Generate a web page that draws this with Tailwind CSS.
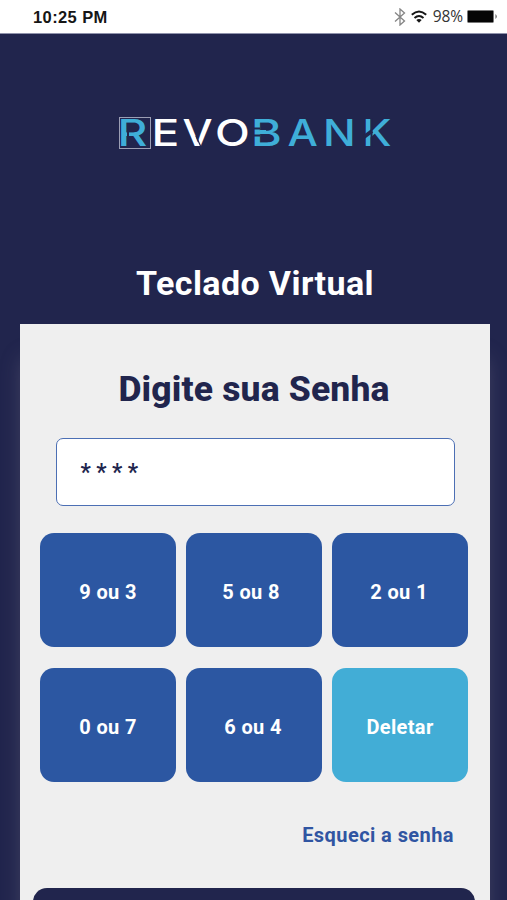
<!DOCTYPE html>
<html lang="pt-BR">
<head>
<meta charset="utf-8">
<meta name="viewport" content="width=device-width, initial-scale=1">
<title>RevoBank</title>
<script src="https://cdn.jsdelivr.net/npm/@tailwindcss/browser@4"></script>
</head>
<body class="h-[900px] overflow-hidden bg-[#21254d] font-['Roboto',sans-serif]">
<div class="flex h-[900px] flex-col overflow-hidden">
  <header class="flex h-[34px] shrink-0 items-center justify-between border-b border-[#8f92ab] bg-white pr-[9px] pl-[33px] font-['Liberation_Sans',sans-serif]">
    <span class="pt-[2px] text-[16.5px] leading-none font-bold tracking-[0.4px] whitespace-nowrap text-[#161616]">10:25 PM</span>
    <div class="flex items-center">
      <svg class="mr-[5px]" width="12" height="18" viewBox="0 0 12 18" fill="none" stroke="#858585" stroke-width="1.3"><path d="M1 4.5 10.5 13 6 17V1l4.5 4L1 13.5"/></svg>
      <svg class="mr-[6px]" width="16" height="13" viewBox="0 0 16 13" fill="none" stroke="#161616" stroke-width="2"><path d="M.8 4.8Q8-1.8 15.2 4.8M3.5 8Q8 4 12.5 8"/><path d="M8 12.7 5.3 10Q8 7.8 10.7 10Z" fill="#161616" stroke="none"/></svg>
      <span class="mr-[4px] font-['Open_Sans',sans-serif] text-[15.5px] leading-none tracking-[-0.1px] text-[#333]">98%</span>
      <svg width="31" height="13" viewBox="0 0 31 13"><rect x=".5" y=".5" width="26" height="12" rx="1" fill="#050505" stroke="#777"/><path d="M28.500 4q2.500 2.500 0 5Z" fill="#555"/></svg>
    </div>
  </header>

  <div class="flex h-[228px] shrink-0 justify-center pt-[76px]">
    <svg class="h-[50px] w-[290px]" viewBox="109 110 290 50" font-family="Inter, sans-serif" font-weight="500" font-size="36.6" role="img" aria-label="RevoBank">
      <rect x="119.5" y="117.5" width="31" height="31" fill="none" stroke="#9b9eb4"/>
      <g fill="#3faed8">
        <text transform="translate(117.500 146.3) scale(1.26 1)">R</text>
        <text transform="translate(251 146.3) scale(1.28 1)">B</text>
        <text transform="translate(287.5 146.3) scale(1.17 1)">A</text>
        <text transform="translate(323 146.3) scale(1.18 1)">N</text>
        <text transform="translate(362.5 146.3) scale(1.15 1)">K</text>
      </g>
      <g fill="#fff">
        <text transform="translate(151.500 146.3) scale(1.26 1)">E</text>
        <text transform="translate(182.500 146.3) scale(1.16 1)">V</text>
        <text transform="translate(215 146.3) scale(1.24 1)">O</text>
      </g>
      <g stroke="#21254d" fill="none">
        <path stroke-width="2" d="M128 131v9M254 128.500h6M254 135.500h6M371.500 118v29"/>
        <path stroke-width="4" d="m364 137 8-6"/>
        <path stroke-width="1.2" d="m196 136 5 11"/>
      </g>
      <path d="M260 132h6" stroke="#3faed8" stroke-width="4"/>
    </svg>
  </div>

  <h1 class="flex h-[62px] shrink-0 justify-center pl-[3px] text-[34px] leading-[43px] font-bold tracking-[0.4px] whitespace-nowrap text-white">Teclado Virtual</h1>

  <main class="ml-[20px] flex w-[470px] flex-1 flex-col bg-[#efefef] shadow-[0_32px_20px_-3px_rgba(130,125,145,0.4)]">
    <h2 class="mt-[43px] text-center text-[35.5px] leading-[44px] font-extrabold tracking-[0.15px] whitespace-nowrap pr-[2px] text-[#21254d]">Digite sua Senha</h2>
    <div class="mr-[35px] ml-[36px] mt-[27px] flex h-[68px] items-center rounded-[7px] border-[1.5px] border-[#4c6fb4] bg-white pt-[2px] pl-[23.500px] text-[23px] font-semibold tracking-[5.400px] text-[#21254d]">****</div>
    <div class="mt-[26.500px] ml-[20px] grid w-[428px] grid-cols-3 gap-x-[10px] gap-y-[21px] text-[20px] font-bold tracking-[0.35px] text-white">
      <button class="h-[114px] rounded-[14px] bg-[#2c57a2] pt-[5px]">9 ou 3</button>
      <button class="h-[114px] rounded-[14px] bg-[#2c57a2] pt-[5px] pr-[6px]">5 ou 8</button>
      <button class="h-[114px] rounded-[14px] bg-[#2c57a2] pt-[5px] pr-[2px]">2 ou 1</button>
      <button class="h-[114px] rounded-[14px] bg-[#2c57a2] pt-[5px]">0 ou 7</button>
      <button class="h-[114px] rounded-[14px] bg-[#2c57a2] pt-[5px] pr-[2px]">6 ou 4</button>
      <button class="h-[114px] rounded-[14px] bg-[#42add6] pt-[5px]">Deletar</button>
    </div>
    <a class="mt-[41px] mr-[36px] text-right text-[20px] leading-[24px] font-bold tracking-[0.43px] text-[#3055a2]">Esqueci a senha</a>
    <button class="ml-[13px] mt-[41px] h-[60px] w-[442px] shrink-0 rounded-[14px] bg-[#21254d]" aria-label="Continuar"></button>
  </main>
</div>
</body>
</html>
